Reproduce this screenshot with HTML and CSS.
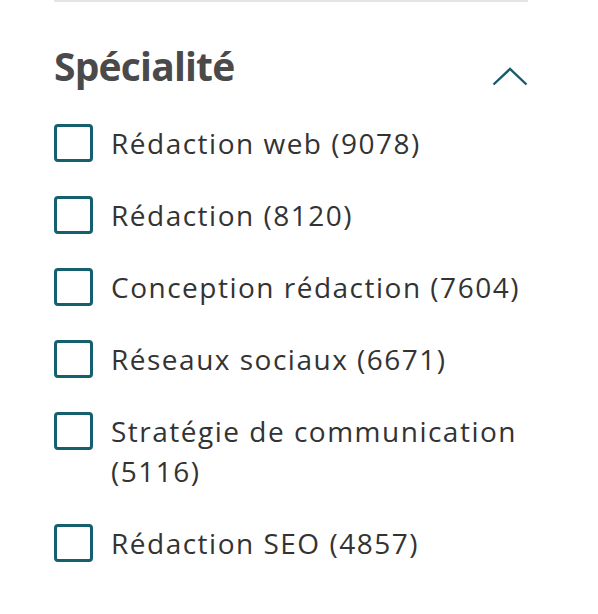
FILE: index.html
```html
<!DOCTYPE html>
<html lang="fr">
<head>
    <meta charset="UTF-8">
    <meta name="viewport" content="width=device-width, initial-scale=1.0">
    <title>Spécialité</title>
    <link rel="stylesheet" href="styles.css">
</head>
<body>
    <section class="filter">
        <div class="filter-head">
            <h2 class="filter-title">Spécialité</h2>
            <button class="toggle" aria-label="Réduire">
                <svg width="36" height="19" viewBox="0 0 36 19">
                    <polyline points="1.5,17.5 18,2 34.5,17.5" fill="none" stroke="#175a6c" stroke-width="2.4"/>
                </svg>
            </button>
        </div>
        <ul class="options">
            <li class="option"><span class="box"></span><span class="label">Rédaction web (9078)</span></li>
            <li class="option"><span class="box"></span><span class="label">Rédaction (8120)</span></li>
            <li class="option"><span class="box"></span><span class="label">Conception rédaction (7604)</span></li>
            <li class="option"><span class="box"></span><span class="label">Réseaux sociaux (6671)</span></li>
            <li class="option"><span class="box"></span><span class="label">Stratégie de communication (5116)</span></li>
            <li class="option"><span class="box"></span><span class="label">Rédaction SEO (4857)</span></li>
        </ul>
    </section>
</body>
</html>
```

FILE: styles.css
```css
body {
    margin: 0;
    background-color: #ffffff;
    font-family: "Open Sans", "Liberation Sans", Arial, sans-serif;
}
.filter {
    width: 474px;
    margin-left: 54px;
    border-top: 2px solid #e4e4e0;
}
.filter-head {
    display: flex;
    justify-content: space-between;
    align-items: flex-start;
    height: 122px;
    box-sizing: border-box;
    padding-top: 39px;
    margin-top: -1px;
}
.filter-title {
    margin: 0;
    font-size: 39px;
    line-height: 52px;
    font-weight: 700;
    color: #4a4a4a;
    letter-spacing: -0.8px;
}
.toggle {
    background: none;
    border: none;
    padding: 0;
    margin-top: 27px;
    display: flex;
    cursor: pointer;
}
.options {
    list-style: none;
    margin: 0;
    padding: 0;
    display: flex;
    flex-direction: column;
    gap: 32px;
}
.option {
    display: flex;
    align-items: flex-start;
    gap: 18px;
}
.box {
    flex: none;
    width: 33px;
    height: 32px;
    margin-top: 1px;
    border: 3px solid #14606f;
    border-radius: 4px;
}
.label {
    font-size: 28px;
    line-height: 40px;
    letter-spacing: 1.5px;
    color: #333333;
    max-width: 418px;
}
```
